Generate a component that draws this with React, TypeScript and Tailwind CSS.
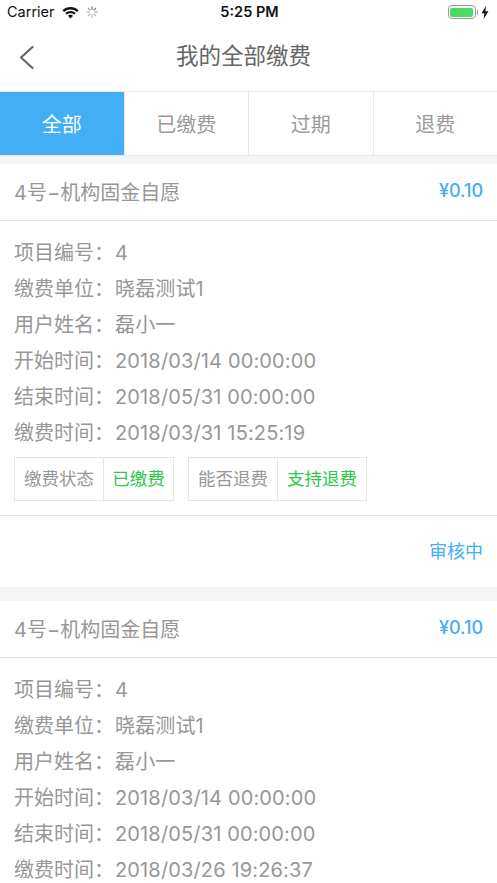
const font = 'font-["Inter","Noto_Sans_CJK_SC",sans-serif]';

const tabs = ['全部', '已缴费', '过期', '退费'];

function StatusBar() {
  return (
    <div className="flex h-[26px] items-center justify-between pb-[2px] pl-[7px] pr-[8px] text-[#111]">
      <div className="flex w-[150px] items-center">
        <span className="text-[14.5px]">Carrier</span>
        <svg className="ml-[7px]" width="17" height="13" viewBox="0 0 17 13">
          <path d="M0.5 4.2C4.9 0 12.1 0 16.5 4.2L14.9 5.9C11.4 2.6 5.6 2.6 2.1 5.9Z" fill="#111" />
          <path d="M3.2 7C6.1 4.2 10.9 4.2 13.8 7L12.2 8.6C10.2 6.8 6.8 6.8 4.8 8.6Z" fill="#111" />
          <path d="M5.9 9.7C7.3 8.4 9.7 8.4 11.1 9.7L8.5 12.4Z" fill="#111" />
        </svg>
        <svg className="ml-[7px]" width="12" height="12" viewBox="0 0 12 12" stroke="#666" strokeWidth="1.1" strokeLinecap="round">
          <path d="M6 0.8V3.2" />
          <path d="M6 8.8V11.2" opacity=".5" />
          <path d="M0.8 6H3.2" opacity=".5" />
          <path d="M8.8 6H11.2" opacity=".7" />
          <path d="M2.3 2.3L4 4" opacity=".6" />
          <path d="M8 8L9.7 9.7" opacity=".5" />
          <path d="M9.7 2.3L8 4" opacity=".9" />
          <path d="M4 8L2.3 9.7" opacity=".5" />
        </svg>
      </div>
      <span className="ml-[3px] text-[14.5px] font-semibold">5:25 PM</span>
      <div className="flex w-[150px] items-center justify-end">
        <div className="flex h-[14px] w-[28px] items-center rounded-[4px] border border-[#999] p-[1.5px]">
          <div className="h-full w-full rounded-[2px] bg-[#4cd964]" />
        </div>
        <div className="ml-[1px] h-[5px] w-[1.5px] rounded-r-sm bg-[#999]" />
        <svg className="ml-[3px]" width="8" height="13" viewBox="0 0 8 13">
          <path d="M5 0L0.5 7.3H3.4L2.6 13L7.5 5.3H4.4Z" fill="#111" />
        </svg>
      </div>
    </div>
  );
}

function Row({ label, value }: { label: string; value: string }) {
  return (
    <div className="h-[36px] leading-[36px]">
      {label}：<span className="ml-[1px] tracking-[0.14px]">{value}</span>
    </div>
  );
}

function Tag({ label, value, width }: { label: string; value: string; width: string }) {
  return (
    <div className={`flex h-[44px] items-center border border-[#e6e6e6] text-[17.5px] ${width}`}>
      <div className="flex h-full w-[88px] items-center justify-center">{label}</div>
      <div className="flex h-full flex-1 items-center justify-center border-l border-[#e6e6e6] text-[#2cc84d]">{value}</div>
    </div>
  );
}

function Card({ paid, tail }: { paid: string; tail?: boolean }) {
  return (
    <div className="bg-white">
      <div className="flex h-[57px] items-center justify-between border-b border-[#e6e6e6] px-[14px]">
        <span className="pt-[1px] text-[20px] text-[#979797]">4号−机构固金自愿</span>
        <span className="pb-[3px] text-[18px] font-medium text-[#42aef5]">¥0.10</span>
      </div>
      <div className="px-[14px] pt-[14px] text-[20px] text-[#979797]">
        <Row label="项目编号" value="4" />
        <Row label="缴费单位" value="晓磊测试1" />
        <Row label="用户姓名" value="磊小一" />
        <Row label="开始时间" value="2018/03/14 00:00:00" />
        <Row label="结束时间" value="2018/05/31 00:00:00" />
        <Row label="缴费时间" value={paid} />
      </div>
      {tail && (
        <>
          <div className="flex gap-[14px] px-[14px] pt-[6px] pb-[14px] text-[#979797]">
            <Tag label="缴费状态" value="已缴费" width="w-[160px]" />
            <Tag label="能否退费" value="支持退费" width="w-[179px]" />
          </div>
          <div className="flex h-[72px] items-center justify-end border-t border-[#e6e6e6] px-[14px] text-[18px] text-[#42aef5]">
            审核中
          </div>
        </>
      )}
    </div>
  );
}

export default function App() {
  return (
    <div className={`h-[883px] w-[497px] overflow-hidden bg-white ${font}`}>
      <StatusBar />
      <div className="relative flex h-[65px] items-center justify-center pr-[10px] pb-[6px] text-[22.5px] text-[#666]">
        <svg className="absolute left-[18px] top-[19px]" width="16" height="24" viewBox="0 0 16 24" fill="none" stroke="#666" strokeWidth="2.2" strokeLinecap="round" strokeLinejoin="round">
          <path d="M14.5 2L3 12.5L14.5 23" />
        </svg>
        我的全部缴费
      </div>
      <div className="flex h-[65px] border-y border-[#e8e8e8] text-[20px] text-[#9a9a9a]">
        {tabs.map((tab, i) => (
          <div
            key={tab}
            className={i === 0
              ? 'flex flex-1 items-center justify-center bg-[#42aef5] pt-[2px] text-white'
              : 'flex flex-1 items-center justify-center border-l border-[#e8e8e8] pt-[2px]'}
          >
            {tab}
          </div>
        ))}
      </div>
      <div className="h-[8px] bg-[#f5f5f5]" />
      <Card paid="2018/03/31 15:25:19" tail />
      <div className="h-[14px] bg-[#f5f5f5]" />
      <Card paid="2018/03/26 19:26:37" />
    </div>
  );
}
